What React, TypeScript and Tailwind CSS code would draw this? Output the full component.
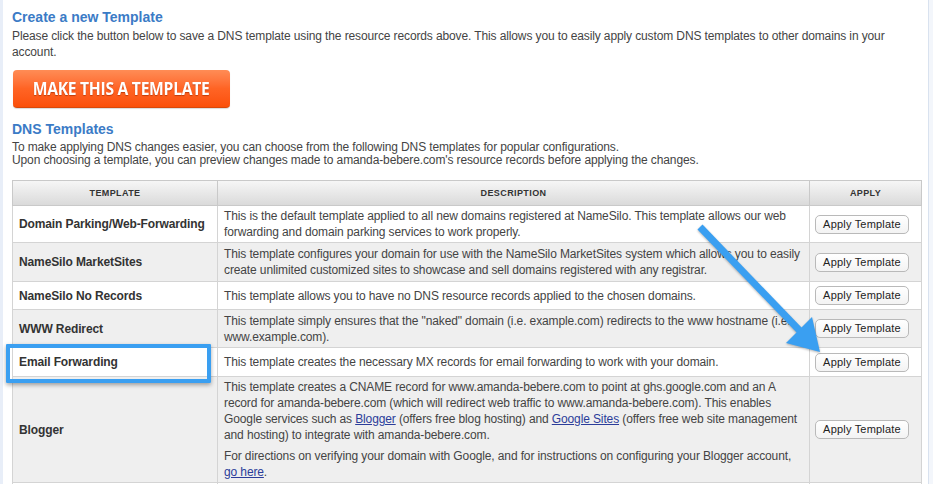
import React from "react";

const rows: {
  name: string;
  h: string;
  gray: boolean;
  desc: React.ReactNode;
}[] = [
  {
    name: "Domain Parking/Web-Forwarding",
    h: "h-[37px]",
    gray: false,
    desc: "This is the default template applied to all new domains registered at NameSilo. This template allows our web forwarding and domain parking services to work properly.",
  },
  {
    name: "NameSilo MarketSites",
    h: "h-[39px]",
    gray: true,
    desc: "This template configures your domain for use with the NameSilo MarketSites system which allows you to easily create unlimited customized sites to showcase and sell domains registered with any registrar.",
  },
  {
    name: "NameSilo No Records",
    h: "h-[28px]",
    gray: false,
    desc: "This template allows you to have no DNS resource records applied to the chosen domains.",
  },
  {
    name: "WWW Redirect",
    h: "h-[38px]",
    gray: true,
    desc: 'This template simply ensures that the "naked" domain (i.e. example.com) redirects to the www hostname (i.e. www.example.com).',
  },
  {
    name: "Email Forwarding",
    h: "h-[29px]",
    gray: false,
    desc: "This template creates the necessary MX records for email forwarding to work with your domain.",
  },
  {
    name: "Blogger",
    h: "h-[105px]",
    gray: true,
    desc: (
      <>
        <p>
          This template creates a CNAME record for www.amanda-bebere.com to point at ghs.google.com and an A
          record for amanda-bebere.com (which will redirect web traffic to www.amanda-bebere.com). This enables
          Google services such as{" "}
          <a className="text-[#2b3d9a] underline" href="#">
            Blogger
          </a>{" "}
          (offers free blog hosting) and{" "}
          <a className="text-[#2b3d9a] underline" href="#">
            Google Sites
          </a>{" "}
          (offers free web site management and hosting) to integrate with amanda-bebere.com.
        </p>
        <p className="mt-[5px]">
          For directions on verifying your domain with Google, and for instructions on configuring your Blogger
          account,{" "}
          <a className="text-[#2b3d9a] underline" href="#">
            go here
          </a>
          .
        </p>
      </>
    ),
  },
];

function ApplyBtn() {
  return (
    <button className="h-[19px] w-[94px] rounded-[5px] border border-[#b9b9b9] bg-gradient-to-b from-white to-[#f3f3f3] text-[11px] leading-[17px] text-[#222] tracking-[0.2px]">
      Apply Template
    </button>
  );
}

export default function App() {
  return (
    <div className="relative flex h-[484px] w-[933px] overflow-hidden bg-white font-['Liberation_Sans',Arial,sans-serif] text-[#3a3a3a]">
      <div className="w-[3px] shrink-0 bg-[#e8eef8]" />
      <div className="flex-1 pl-[9px] pr-[6px]">
        <h2 className="pt-[8px] text-[14px] font-bold leading-[18px] text-[#3b7bc6]">Create a new Template</h2>
        <p className="mt-[2px] text-[12px] leading-[16px] tracking-[-0.12px] text-[#444]">
          Please click the button below to save a DNS template using the resource records above. This allows you
          to easily apply custom DNS templates to other domains in your account.
        </p>
        <button className="ml-[1px] mt-[10px] flex h-[38px] w-[217px] items-center justify-center rounded-[4px] border-b border-[#d8480a] bg-gradient-to-b from-[#ff8c55] via-[#ff6424] to-[#fb4f08] shadow-[0_1px_1px_rgba(0,0,0,0.15)]">
          <span className="inline-block scale-x-[0.92] font-['Open_Sans',sans-serif] text-[17px] font-bold tracking-[-0.3px] text-white [text-shadow:0_1px_1px_rgba(150,40,0,0.6)]">
            MAKE THIS A TEMPLATE
          </span>
        </button>
        <h2 className="mt-[12px] text-[14px] font-bold leading-[18px] text-[#3b7bc6]">DNS Templates</h2>
        <p className="mt-[3px] text-[12px] leading-[13px] tracking-[-0.12px] text-[#444]">
          To make applying DNS changes easier, you can choose from the following DNS templates for popular
          configurations.
          <br />
          Upon choosing a template, you can preview changes made to amanda-bebere.com's resource records before
          applying the changes.
        </p>
        <table className="mt-[13px] w-[909px] table-fixed border-collapse border border-[#c9c9c9] text-[12px] leading-[16px] tracking-[-0.12px]">
          <colgroup>
            <col className="w-[205px]" />
            <col className="w-[592px]" />
            <col className="w-[112px]" />
          </colgroup>
          <thead>
            <tr className="h-[25px] bg-gradient-to-b from-[#f6f6f6] to-[#d9d9d9]">
              <th className="border border-[#c9c9c9] text-center text-[9px] font-bold tracking-[0.4px] text-[#333]">
                TEMPLATE
              </th>
              <th className="border border-[#c9c9c9] text-center text-[9px] font-bold tracking-[0.4px] text-[#333]">
                DESCRIPTION
              </th>
              <th className="border border-[#c9c9c9] text-center text-[9px] font-bold tracking-[0.4px] text-[#333]">
                APPLY
              </th>
            </tr>
          </thead>
          <tbody>
            {rows.map((r) => (
              <tr key={r.name} className={`${r.h} ${r.gray ? "bg-[#efefef]" : "bg-white"}`}>
                <td className="border border-[#d4d4d4] px-[6px] align-middle font-bold text-[#333]">{r.name}</td>
                <td className="border border-[#d4d4d4] px-[6px] py-[2px] align-middle text-[#444]">{r.desc}</td>
                <td className="border border-[#d4d4d4] pr-[7px] text-center align-middle">
                  <ApplyBtn />
                </td>
              </tr>
            ))}
            <tr className="h-[30px] bg-white">
              <td className="border border-[#d4d4d4]" />
              <td className="border border-[#d4d4d4]" />
              <td className="border border-[#d4d4d4]" />
            </tr>
          </tbody>
        </table>
      </div>
      <div className="w-[6px] shrink-0 border-l border-[#d9e2ef] bg-[#f3f6fb]" />

      {/* highlight box */}
      <div className="pointer-events-none absolute left-[6px] top-[344px] h-[39px] w-[205px] rounded-[1px] border-[4px] border-[#3a9ff1] shadow-[0_2px_4px_rgba(0,0,0,0.35)]" />

      {/* arrow */}
      <svg
        className="pointer-events-none absolute left-0 top-0 drop-shadow-[0_1px_1px_rgba(0,0,0,0.3)]"
        width="933"
        height="484"
        viewBox="0 0 933 484"
      >
        <line x1="700" y1="227" x2="801" y2="332" stroke="#3a9ff1" strokeWidth="7" />
        <polygon points="820,352 786,343 812,317" fill="#3a9ff1" />
      </svg>
    </div>
  );
}
